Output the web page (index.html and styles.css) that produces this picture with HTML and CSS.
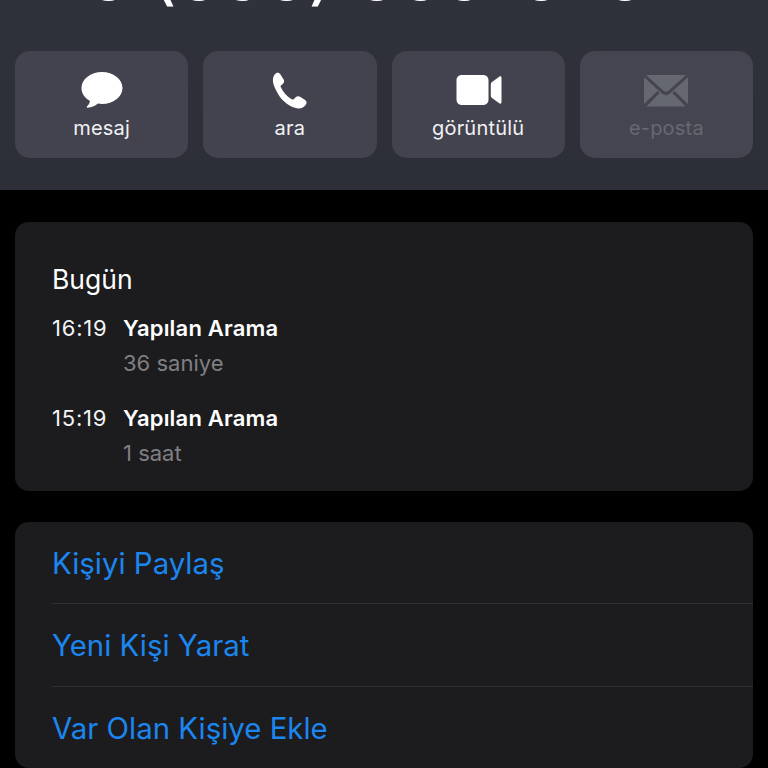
FILE: index.html
```html
<!DOCTYPE html>
<html lang="tr">
<head>
<meta charset="utf-8">
<title>Kişi</title>
<link rel="stylesheet" href="styles.css">
</head>
<body>
<header class="hero">
  <div class="number">5 (555) 555-5757</div>
  <nav class="actions">
    <div class="action">
      <svg class="icon" viewBox="0 0 44 40"><path fill="#fff" d="M22 1C10.700 1 1.500 8.100 1.500 17c0 5.400 3.300 10.100 8.500 13-.4 2.100-1.500 3.900-2.900 5.300-.6.600-.2 1.500.6 1.400 3.400-.3 7.300-1.600 10.200-4.100 1.300.2 2.700.4 4.100.4 11.300 0 20.500-7.100 20.500-16S33.300 1 22 1z"/></svg>
      <span>mesaj</span>
    </div>
    <div class="action">
      <svg class="icon" viewBox="0 0 44 40"><path fill="#fff" d="M8 2.300c1.500-.9 3.500-.4 4.500 1.100l3.100 5c.9 1.400.6 3.200-.6 4.300l-2 1.700c-.5.500-.6 1.100-.3 1.700 1.200 2.500 2.800 4.900 4.800 7.100 2 2.100 4.300 3.900 6.800 5.200.6.300 1.200.2 1.700-.3l1.900-2c1.100-1.100 2.900-1.300 4.200-.4l5 3.300c1.500 1 1.900 3 .9 4.500-1.500 2.300-3.800 3.900-7.200 4-4.100.1-10.800-2.800-16.800-8.900C8.500 21.300 5 13.800 4.900 9.700 4.800 6.400 6 3.900 8 2.300z"/></svg>
      <span>ara</span>
    </div>
    <div class="action">
      <svg class="icon video" viewBox="-3 1 50 40"><path fill="#fff" d="M6 5h21c3.300 0 5.500 2.200 5.500 5.500v19c0 3.300-2.200 5.500-5.500 5.500H6c-3.300 0-5.500-2.200-5.500-5.500v-19C.5 7.200 2.700 5 6 5zM43.200 6.700c1.300-.8 2.300-.2 2.300 1.300v24c0 1.500-1 2.100-2.300 1.300L36 28c-.8-.5-1.200-1.300-1.200-2.200V14.200c0-.9.400-1.700 1.200-2.200z"/></svg>
      <span>görüntülü</span>
    </div>
    <div class="action disabled">
      <svg class="icon wide" viewBox="0 0 46 40"><path fill="#656771" d="M1 6.200l18.300 16.500c2.200 1.900 5.200 1.900 7.400 0L45 6.200V33l-13.500-13-2.100 2L42.500 35.500H3.500L16.600 22l-2.100-2L1 33zM3 4h40L25.200 20c-1.300 1.100-3.100 1.100-4.400 0z"/></svg>
      <span>e-posta</span>
    </div>
  </nav>
</header>

<main class="content">
  <section class="card history">
    <h2 class="day">Bugün</h2>
    <div class="call">
      <div class="time">16:19</div>
      <div class="detail">
        <div class="kind">Yapılan Arama</div>
        <div class="duration">36 saniye</div>
      </div>
    </div>
    <div class="call">
      <div class="time">15:19</div>
      <div class="detail">
        <div class="kind">Yapılan Arama</div>
        <div class="duration">1 saat</div>
      </div>
    </div>
  </section>

  <section class="card links">
    <div class="link">Kişiyi Paylaş</div>
    <div class="link">Yeni Kişi Yarat</div>
    <div class="link">Var Olan Kişiye Ekle</div>
  </section>
</main>
</body>
</html>
```

FILE: styles.css
```css
* { box-sizing: border-box; }

html, body {
  margin: 0;
  height: 768px;
  overflow: hidden;
  background: #000;
  font-family: Inter, "Noto Sans", sans-serif;
}

.hero {
  height: 190px;
  overflow: hidden;
  background: linear-gradient(#2f323b, #2d2f38);
  padding: 0 15px;
}

.number {
  height: 106px;
  margin-top: -55px;
  padding-left: 6px;
  text-align: center;
  color: #fff;
  font-size: 72px;
  line-height: 58px;
  white-space: nowrap;
}

.actions {
  display: grid;
  grid-template-columns: repeat(4, 1fr);
  gap: 15px;
}

.action {
  height: 107px;
  border-radius: 15px;
  background: #42434f;
  color: #f2f2f4;
  font-size: 20px;
  letter-spacing: 0.2px;
  line-height: 22px;
  display: flex;
  flex-direction: column;
  align-items: center;
  padding-top: 20px;
}

.action .icon {
  width: 44px;
  height: 40px;
  margin-bottom: 6px;
}

.action .icon.wide {
  width: 46px;
}

.action .icon.video {
  width: 50px;
}

.action.disabled {
  background: #444550;
  color: #676872;
}

.content {
  padding: 32px 15px 0;
}

.card {
  background: #1c1c1e;
  border-radius: 14px;
}

.history {
  height: 269px;
  padding: 42px 37px 0;
}

.day {
  margin: 0 0 20px;
  color: #fff;
  font-size: 26.500px;
  font-weight: 400;
  line-height: 30px;
}

.call {
  display: flex;
  height: 90px;
}

.time {
  width: 71px;
  color: #f4f4f5;
  font-size: 22px;
  letter-spacing: 0.8px;
  line-height: 28px;
}

.kind {
  color: #fff;
  font-size: 22px;
  font-weight: 600;
  letter-spacing: 0.2px;
  line-height: 28px;
}

.duration {
  margin-top: 7px;
  color: #7f7f83;
  font-size: 22px;
  line-height: 28px;
}

.links {
  margin-top: 31px;
  padding-left: 37px;
  height: 246px;
}

.link {
  height: 82px;
  color: #1b86ef;
  font-size: 29.400px;
  line-height: 83px;
  border-bottom: 1px solid #2f2f31;
}

.link:nth-child(2) {
  height: 83px;
}

.link:last-child {
  border-bottom: 0;
}
```
